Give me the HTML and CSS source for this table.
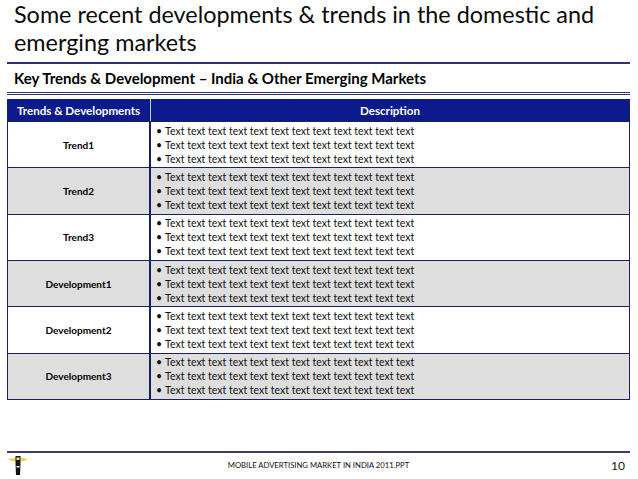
FILE: index.html
```html
<!DOCTYPE html>
<html lang="en">
<head>
<meta charset="utf-8">
<title>Key Trends &amp; Development</title>
<link rel="stylesheet" href="styles.css">
</head>
<body>
<div class="slide">
  <h1 class="title">Some recent developments &amp; trends in the domestic and<br>emerging markets</h1>
  <div class="rule"></div>
  <h2 class="subtitle">Key Trends &amp; Development – India &amp; Other Emerging Markets</h2>
  <div class="double-rule"></div>
  <div class="table">
    <div class="thead">
      <div class="th th-left">Trends &amp; Developments</div>
      <div class="th th-right">Description</div>
    </div>
    <div class="tbody">
      <div class="row">
        <div class="label">Trend1</div>
        <ul class="desc">
          <li>Text text text text text text text text text text text text</li>
          <li>Text text text text text text text text text text text text</li>
          <li>Text text text text text text text text text text text text</li>
        </ul>
      </div>
      <div class="row alt">
        <div class="label">Trend2</div>
        <ul class="desc">
          <li>Text text text text text text text text text text text text</li>
          <li>Text text text text text text text text text text text text</li>
          <li>Text text text text text text text text text text text text</li>
        </ul>
      </div>
      <div class="row">
        <div class="label">Trend3</div>
        <ul class="desc">
          <li>Text text text text text text text text text text text text</li>
          <li>Text text text text text text text text text text text text</li>
          <li>Text text text text text text text text text text text text</li>
        </ul>
      </div>
      <div class="row alt">
        <div class="label">Development1</div>
        <ul class="desc">
          <li>Text text text text text text text text text text text text</li>
          <li>Text text text text text text text text text text text text</li>
          <li>Text text text text text text text text text text text text</li>
        </ul>
      </div>
      <div class="row">
        <div class="label">Development2</div>
        <ul class="desc">
          <li>Text text text text text text text text text text text text</li>
          <li>Text text text text text text text text text text text text</li>
          <li>Text text text text text text text text text text text text</li>
        </ul>
      </div>
      <div class="row alt">
        <div class="label">Development3</div>
        <ul class="desc">
          <li>Text text text text text text text text text text text text</li>
          <li>Text text text text text text text text text text text text</li>
          <li>Text text text text text text text text text text text text</li>
        </ul>
      </div>
    </div>
  </div>
  <div class="spacer"></div>
  <footer class="footer">
    <div class="footer-rule"></div>
    <div class="footer-row">
      <svg class="logo" width="20" height="21" viewBox="0 0 20 21" aria-hidden="true">
        <path d="M0 4.5 Q5 2 10 3.2 Q15 2 20 4.5 Q15 7.2 10 6 Q5 7.2 0 4.5Z" fill="#f2d34a"/>
        <rect x="7.5" y="1" width="5" height="7" fill="#1a1a1a"/>
        <rect x="8.5" y="2.5" width="3" height="2.5" fill="#f5e27a"/>
        <path d="M7.5 8 L12.5 8 L12 20 L8 20Z" fill="#111"/>
        <rect x="8.5" y="11" width="3" height="1.5" fill="#fff"/>
      </svg>
      <span class="footer-text">MOBILE ADVERTISING MARKET IN INDIA 2011.PPT</span>
      <span class="page-num">10</span>
    </div>
  </footer>
</div>
</body>
</html>
```
FILE: styles.css
```css
html, body {
  margin: 0;
  padding: 0;
  background: #ffffff;
}

body {
  font-family: Lato, "Open Sans", "Liberation Sans", sans-serif;
  color: #000;
}

.slide {
  width: 638px;
  height: 479px;
  display: flex;
  flex-direction: column;
  overflow: hidden;
}

.title {
  margin: 0;
  padding: 0 0 0 14px;
  height: 62px;
  box-sizing: border-box;
  font-size: 23.4px;
  font-weight: 400;
  line-height: 28px;
  color: #0a0a0a;
}

.rule {
  margin: 0 8px 0 7px;
  height: 2px;
  background: #2d3273;
}

.subtitle {
  margin: 0;
  padding: 0 0 0 14px;
  height: 28px;
  font-size: 15px;
  font-weight: 700;
  line-height: 28px;
  color: #000;
}

.double-rule {
  margin: 0 8px 0 7px;
  height: 1px;
  border-top: 1px solid #2d3273;
  border-bottom: 1px solid #2d3273;
}

.table {
  margin: 4px 8px 0 7px;
  border: 1px solid #1a1f5e;
  border-top: none;
  display: flex;
  flex-direction: column;
}

.thead {
  display: grid;
  grid-template-columns: 143px 1fr;
  height: 22px;
  background: #0c1a8e;
  color: #fff;
  font-size: 11.6px;
  font-weight: 700;
}

.th {
  display: flex;
  align-items: center;
}

.th-left {
  padding-left: 9px;
  border-right: 1px solid #c9cde8;
}

.th-right {
  justify-content: center;
}

.tbody {
  height: 278px;
  display: grid;
  grid-auto-rows: 1fr;
}

.row {
  display: grid;
  grid-template-columns: 143px 1fr;
  border-top: 1px solid #1a1f5e;
  background: #ffffff;
}

.row.alt {
  background: #dedede;
}

.label {
  display: flex;
  align-items: center;
  justify-content: center;
  border-right: 2px solid #1a1f5e;
  font-size: 10px;
  font-weight: 700;
}

.desc {
  margin: 0;
  padding: 0 0 0 5px;
  list-style: none;
  display: flex;
  flex-direction: column;
  justify-content: center;
  font-size: 10.5px;
  line-height: 14px;
  color: #111;
}

.desc li::before {
  content: "\2022";
  margin-right: 3px;
}

.spacer {
  flex: 1;
}

.footer {
  margin: 0 8px 0 7px;
  height: 28px;
}

.footer-rule {
  height: 2px;
  background: #3b3e6e;
}

.footer-row {
  display: grid;
  grid-template-columns: 1fr auto 1fr;
  align-items: center;
  height: 22px;
  padding-top: 1px;
}

.logo {
  margin-left: 1px;
}

.footer-text {
  font-size: 7.7px;
  color: #111;
}

.page-num {
  justify-self: end;
  padding-right: 5px;
  font-size: 12px;
  color: #111;
}
```
